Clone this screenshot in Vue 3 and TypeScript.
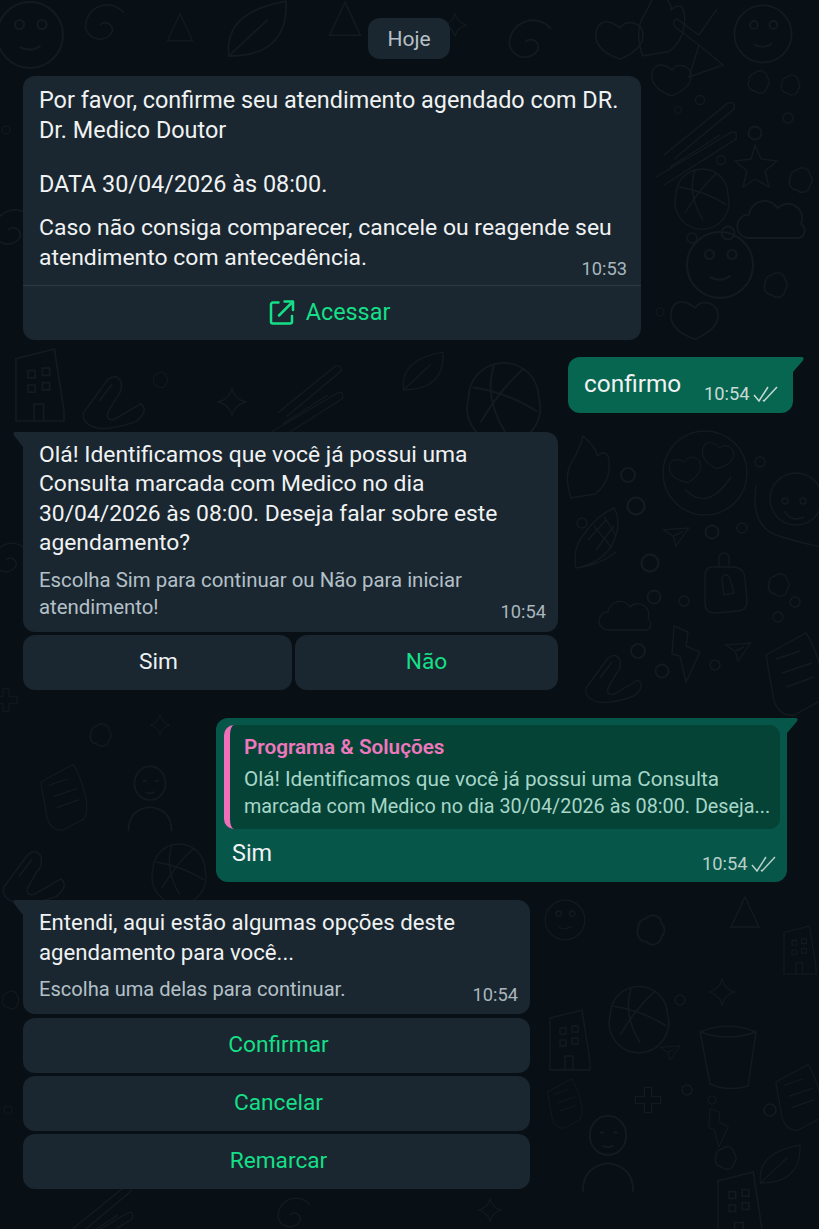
<script setup lang="ts">
interface Doodle { x: number; y: number; s?: number; r?: number; d: string }
const face = 'M-42 0a42 42 0 1 0 84 0a42 42 0 1 0 -84 0M-20 16q22 24 46 -12'
const smile = 'M-22 0a22 22 0 1 0 44 0a22 22 0 1 0 -44 0M-10 -7a3 3 0 1 0 6 0a3 3 0 1 0 -6 0M5 -7a3 3 0 1 0 6 0a3 3 0 1 0 -6 0M-7 8q8 4 14 -1'
const ringFace = 'M-34 -20q-6 40 20 50q30 10 50 12M-20 -6a26 26 0 1 0 52 0a26 26 0 1 0 -52 0M-8 -4a3 3 0 1 0 6 0a3 3 0 1 0 -6 0M10 -4a3 3 0 1 0 6 0a3 3 0 1 0 -6 0M-6 6q8 12 20 6'
const ball = 'M-27 0a27 27 0 1 0 52 0a26 26 0 1 0 -52 0M-24 -8q26 4 48 18M-8 -25q-8 24 8 50M14 -22q-18 16 -32 40'
const star = 'M0 -14q3 11 14 14q-11 3 -14 14q-3 -11 -14 -14q11 -3 14 -14z'
const starOpen = 'M0 -20l6 14l16 2l-12 10l4 16l-14 -8l-12 8l4 -16l-12 -10l16 -2z'
const dot = 'M-5 0a5 5 0 1 0 10 0a5 5 0 1 0 -10 0'
const cloud = 'M-20 10a9 9 0 0 1 0 -18a12 12 0 0 1 22 -5a11 11 0 0 1 18 12a6 6 0 0 1 -2 11z'
const pot = 'M-28 -24q28 10 56 0l-8 54q-20 6 -38 -2zM-28 -24q28 -12 56 0'
const plane = 'M-14 -8l28 -2l-14 20l-3 -11zM-3 -1l10 -5'
const house = 'M-20 30v-52l32 -8l8 52v8zM-10 -12h6v6h-6zM2 -14h6v6h-6zM-10 0h6v6h-6zM2 -2h6v6h-6zM-5 30v-14h8v14'
const corn = 'M-24 28q-4 -20 8 -34q12 -18 30 -26q8 14 0 32q-8 22 -38 28zM-24 28q22 -2 40 -16M-6 -14l18 22M4 -24l12 20M-12 0l18 -20M-4 10l18 -24'
const sticks = 'M-36 20l64 -52q8 -2 6 6l-60 50M-44 42l74 -44q8 -4 6 6l-72 46M-30 32l50 -32'
const bolt = 'M-14 -24l14 6l-2 14l14 6l-14 30l-6 -26l-8 -2z'
const heart = 'M0 16q-22 -8 -20 -22q2 -12 14 -8q4 2 6 4q4 -6 12 -4q10 4 6 16q-4 8 -18 14z'
const plus = 'M-4 -14h8v10h10v8h-10v10h-8v-10h-10v-8h10z'
const flower = 'M-3 -9a7 7 0 0 1 12 4a7 7 0 0 1 0 10a7 7 0 0 1 -12 4a7 7 0 0 1 -6 -10a7 7 0 0 1 6 -8z'
const lock = 'M-20 -12q0 -8 8 -8h22q10 2 10 12l2 22q0 10 -10 10l-22 2q-10 0 -10 -10zM-6 -20v-8q0 -6 5 -6q5 0 5 6v6M-3 -8a4 4 0 0 1 8 0l4 14l-10 2z'
const doc = 'M-24 -10l40 -22q8 10 16 40q4 18 -2 28l-26 14q-14 2 -20 -14zM-14 -6l24 -8M-8 8l30 -10M-4 22l28 -10'
const clip = 'M-24 16l22 -30q8 -6 12 2q2 8 -4 14l-8 14q-2 8 6 6l24 -14q8 6 -4 16q-22 8 -36 6q-14 -4 -12 -14zM-10 6l12 -16'
const person = 'M-18 26q0 -18 18 -20q18 2 18 20M-13 -14a13 14 0 1 0 26 0a13 14 0 1 0 -26 0M-6 -16h3M4 -16h3M-4 -7q4 3 8 0'
const swirl = 'M0 0a6 6 0 0 1 10 6a12 12 0 0 1 -22 -4a18 18 0 0 1 32 -12'
const tri = 'M0 -18l14 30h-28z'
const bow = 'M-6 0l-24 -18q-4 -6 2 -8l22 16l18 -26M-6 0l-10 32l34 -12z'
const flame = 'M-14 28q-8 -24 2 -38q8 -14 10 -24q14 12 14 20q10 -8 12 4q2 22 -14 34z'
const leaf = 'M-24 20q-4 -34 44 -42q2 42 -44 42zM-24 20l30 -28'
const doodles: Doodle[] = [
  { x: 763, y: 34, s: 1.3, d: smile }, { x: 705, y: 45, d: bow }, { x: 672, y: 80, d: heart },
  { x: 658, y: 25, s: 1.1, d: flame }, { x: 700, y: 135, d: sticks }, { x: 755, y: 165, d: starOpen },
  { x: 703, y: 195, d: ball }, { x: 758, y: 82, d: flower }, { x: 790, y: 85, s: .9, d: flower },
  { x: 800, y: 180, s: 1.1, d: flower }, { x: 700, y: 100, s: .9, d: dot }, { x: 678, y: 110, s: .7, d: dot },
  { x: 755, y: 133, s: 1.3, d: dot }, { x: 721, y: 160, s: .9, d: dot }, { x: 788, y: 118, d: dot },
  { x: 728, y: 233, s: 1.3, d: dot }, { x: 692, y: 238, d: dot }, { x: 775, y: 225, s: 1.3, d: cloud },
  { x: 720, y: 265, s: 1.5, d: smile }, { x: 775, y: 285, s: 1.1, d: flower },
  { x: 695, y: 320, s: 1.2, d: heart }, { x: 660, y: 312, s: .8, d: dot },
  { x: 525, y: 42, s: 1.3, d: swirl }, { x: 455, y: 25, s: .8, d: star }, { x: 620, y: 40, s: 1.2, d: heart },
  { x: 345, y: 22, s: 1.1, d: tri }, { x: 260, y: 30, s: 1.3, d: leaf }, { x: 180, y: 30, s: .9, d: tri },
  { x: 100, y: 25, s: 1.2, d: swirl }, { x: 30, y: 35, s: 1.5, d: smile },
  { x: 8, y: 230, s: 1.2, d: swirl }, { x: 6, y: 130, s: .8, d: dot },
  { x: 505, y: 398, s: 1.35, d: ball }, { x: 232, y: 402, s: .95, d: star }, { x: 310, y: 395, s: .9, d: sticks },
  { x: 110, y: 395, s: 1.1, d: clip }, { x: 425, y: 372, s: .9, d: leaf }, { x: 40, y: 385, s: 1.2, d: house },
  { x: 160, y: 380, s: .7, d: flower }, { x: 615, y: 380, s: 1, d: flower },
  { x: 705, y: 473, d: face }, { x: 686, y: 470, s: .8, r: -10, d: heart }, { x: 718, y: 456, s: .8, r: 10, d: heart },
  { x: 790, y: 505, d: ringFace }, { x: 600, y: 540, d: corn },
  { x: 585, y: 470, d: flame }, { x: 676, y: 537, s: .9, d: plane }, { x: 725, y: 587, d: lock },
  { x: 628, y: 620, d: cloud }, { x: 688, y: 650, d: bolt }, { x: 738, y: 652, s: .9, d: plane },
  { x: 790, y: 665, d: doc }, { x: 610, y: 672, d: clip }, { x: 778, y: 585, s: 1, d: flower },
  { x: 628, y: 475, s: 1.4, d: dot }, { x: 636, y: 506, s: 1.7, d: dot }, { x: 582, y: 523, d: dot },
  { x: 712, y: 532, s: 1.3, d: dot }, { x: 742, y: 528, d: dot }, { x: 760, y: 462, d: dot },
  { x: 650, y: 563, s: 1.7, d: dot }, { x: 654, y: 597, s: 1.3, d: dot }, { x: 684, y: 601, d: dot },
  { x: 778, y: 617, d: dot }, { x: 638, y: 651, s: 1.4, d: dot }, { x: 662, y: 671, s: 1.3, d: dot },
  { x: 715, y: 665, d: dot }, { x: 795, y: 602, d: dot },
  { x: 160, y: 725, s: .7, d: star }, { x: 60, y: 790, s: .8, d: doc }, { x: 150, y: 800, s: 1.2, d: person },
  { x: 100, y: 735, s: 1, d: flower }, { x: 30, y: 870, s: 1.1, d: clip }, { x: 180, y: 870, s: 1, d: ball },
  { x: 6, y: 700, s: .8, d: plus }, { x: 6, y: 560, s: 1, d: swirl },
  { x: 565, y: 920, s: .9, d: smile }, { x: 650, y: 930, s: 1.3, d: flower }, { x: 745, y: 915, d: tri },
  { x: 800, y: 950, s: .8, d: house }, { x: 728, y: 1056, d: pot }, { x: 570, y: 1040, s: 1, d: house },
  { x: 640, y: 1015, s: 1.1, d: ball }, { x: 722, y: 992, s: .9, d: star }, { x: 670, y: 1053, s: .7, d: plane },
  { x: 562, y: 1098, s: .6, d: doc }, { x: 648, y: 1100, s: .9, d: plus }, { x: 608, y: 1155, s: 1.4, d: person },
  { x: 720, y: 1125, s: .7, d: bolt }, { x: 795, y: 1090, s: .8, d: doc }, { x: 740, y: 1205, s: 1.1, d: house },
  { x: 100, y: 1215, s: .9, d: sticks }, { x: 290, y: 1215, s: 1, d: swirl }, { x: 490, y: 1210, s: .8, d: star },
  { x: 10, y: 1000, s: .8, d: flower }, { x: 8, y: 1110, s: .8, d: dot }, { x: 680, y: 1000, d: dot },
  { x: 687, y: 1090, d: dot }, { x: 712, y: 1100, s: .8, d: dot }, { x: 770, y: 1110, s: 1.2, d: dot },
  { x: 725, y: 1158, d: flower }, { x: 782, y: 1165, s: .9, d: leaf }
]
const transformOf = (d: Doodle) => `translate(${d.x} ${d.y}) scale(${d.s ?? 1}) rotate(${d.r ?? 0})`
const buttons = ['Confirmar', 'Cancelar', 'Remarcar']
</script>

<template>
  <main class="chat">
    <svg class="wallpaper" width="819" height="1229" viewBox="0 0 819 1229" aria-hidden="true">
      <path v-for="(d, i) in doodles" :key="i" :d="d.d" :transform="transformOf(d)" />
    </svg>

    <div class="chip">Hoje</div>

    <section class="bubble in first">
      <div class="body">
        <p class="text wide">Por favor, confirme seu atendimento agendado com DR.<br />Dr. Medico Doutor</p>
        <p class="text wide date">DATA 30/04/2026 às 08:00.</p>
        <p class="text note">Caso não consiga comparecer, cancele ou reagende seu<br />atendimento com antecedência.</p>
        <span class="time abs low">10:53</span>
      </div>
      <div class="access">
        <svg width="26" height="26" viewBox="0 0 26 26" fill="none" stroke="#15df87" stroke-width="2.5" stroke-linecap="round" stroke-linejoin="round">
          <path d="M9.5 3.5H4a2 2 0 0 0-2 2v17a2 2 0 0 0 2 2h17a2 2 0 0 0 2-2V17" />
          <path d="M10 16.5 22 4.5" />
          <path d="M15.5 2.5h8.5v8.5" />
        </svg>
        <span>Acessar</span>
      </div>
    </section>

    <section class="bubble out confirm">
      <span class="text large">confirmo</span>
      <span class="time">10:54
        <svg class="ticks" width="26" height="18" viewBox="0 0 26 18" fill="none" stroke="currentColor" stroke-width="1.5"><path d="M1 10l5 6L15 2M10 15l1 1L24 2" /></svg>
      </span>
      <i class="tail-out" />
    </section>

    <section class="bubble in second tailed">
      <i class="tail-in" />
      <p class="text mid">Olá! Identificamos que você já possui uma<br />Consulta marcada com Medico no dia<br />30/04/2026 às 08:00. Deseja falar sobre este<br />agendamento?</p>
      <p class="foot">Escolha Sim para continuar ou Não para iniciar<br />atendimento!</p>
      <span class="time abs">10:54</span>
    </section>
    <div class="pair">
      <button class="action plain sim">Sim</button>
      <button class="action">Não</button>
    </div>

    <section class="bubble out reply">
      <i class="tail-out" />
      <div class="quote">
        <strong>Programa &amp; Soluções</strong>
        <span class="q1">Olá! Identificamos que você já possui uma Consulta</span>
        <span class="q2">marcada com Medico no dia 30/04/2026 às 08:00. Deseja...</span>
      </div>
      <div class="reply-row">
        <span class="text large-sim">Sim</span>
        <span class="time">10:54
          <svg class="ticks" width="26" height="18" viewBox="0 0 26 18" fill="none" stroke="currentColor" stroke-width="1.5"><path d="M1 10l5 6L15 2M10 15l1 1L24 2" /></svg>
        </span>
      </div>
    </section>

    <section class="bubble in third tailed">
      <i class="tail-in" />
      <p class="text">Entendi, aqui estão algumas opções deste<br />agendamento para você...</p>
      <p class="foot">Escolha uma delas para continuar.</p>
      <span class="time abs">10:54</span>
    </section>
    <div class="stack">
      <button v-for="b in buttons" :key="b" class="action">{{ b }}</button>
    </div>
  </main>
</template>

<style>
html, body { margin: 0; background: #081015; }
</style>

<style scoped>
.chat {
  position: relative;
  width: 819px;
  height: 1229px;
  overflow: hidden;
  box-sizing: border-box;
  padding: 18px 0 0 23px;
  background: #081015;
  font-family: Roboto, "Noto Sans", sans-serif;
  color: #eef1f2;
}
.wallpaper { position: absolute; inset: 0; fill: none; stroke: #131b20; stroke-width: 1.4; }
.chip, .bubble, .pair, .stack { position: relative; }
.chip {
  width: 82px; height: 41px; margin-left: 345px; border-radius: 12px;
  background: #1a2730; color: #b5c0c7; font-size: 21px; line-height: 42px; text-align: center;
}
.bubble { box-sizing: border-box; border-radius: 12px; }
.in { background: #1a2730; }
.out { background: #055c47; }
.tailed { border-top-left-radius: 0; }
p { margin: 0; }
.text { font-size: 22.2px; line-height: 29.4px; color: #f0f2f3; }
.wide { font-size: 23.4px; line-height: 30.4px; }
.mid { font-size: 22.85px; }
.large { font-size: 24.4px; }
.large-sim { font-size: 23.4px; }
.first { width: 618px; height: 264px; margin-top: 17px; }
.body { position: relative; height: 210px; padding: 9px 16px 0; box-sizing: border-box; border-bottom: 1px solid #2d3a42; }
.date { margin-top: 23px; }
.note { margin-top: 14px; font-size: 22.95px; }
.time { font-size: 18.3px; line-height: 20px; color: #a9b6bd; white-space: nowrap; }
.abs { position: absolute; right: 12px; bottom: 10px; }
.low { right: 14px; bottom: 6px; }
.access { height: 54px; display: flex; align-items: center; justify-content: center; gap: 11px; padding: 0 5px 2px 0; box-sizing: border-box; color: #15df87; font-size: 23.4px; }
.confirm { width: 225px; height: 56px; margin: 17px 0 0 545px; padding: 12px 14px 12px 16px; display: flex; justify-content: space-between; align-items: flex-start; background: #066650; border-top-right-radius: 0; }
.confirm .time { margin-top: 15px; color: #c9dad5; }
.ticks { vertical-align: -3px; margin-left: -1px; }
.tail-out { position: absolute; top: 0; left: 100%; width: 11px; height: 15px; background: inherit; clip-path: polygon(0 0, 82% 0, 98% 6%, 88% 25%, 0 100%); }
.tail-in { position: absolute; top: 0; right: 100%; width: 10px; height: 15px; background: inherit; clip-path: polygon(100% 0, 18% 0, 2% 6%, 12% 25%, 100% 100%); }
.second { width: 535px; height: 200px; margin-top: 19px; padding: 8px 16px 0; }
.foot { margin-top: 9px; font-size: 20.4px; line-height: 27px; color: #b4c0c8; }
.pair { display: flex; gap: 3px; width: 535px; margin-top: 3px; }
.action {
  display: block; flex: none; width: 100%; height: 55px; padding: 0 0 2px; border: 0; border-radius: 12px;
  background: #1a2730; color: #15df87; font: 400 22.7px/30px Roboto, "Noto Sans", sans-serif; text-align: center;
}
.pair .action { flex: 1; width: auto; }
.stack .action { padding-left: 4px; }
.plain { color: #eef1f2; }
.pair .sim { flex: none; width: 269px; padding-left: 2px; }
.reply { width: 571px; height: 164px; margin: 28px 0 0 193px; padding: 7px 7px 0 8px; background: #06574a; border-top-right-radius: 0; }
.quote {
  box-sizing: border-box; height: 104px; padding: 9px 8px 0 14px; border-left: 6px solid #f06fb9; border-radius: 10px;
  background: #044336; display: flex; flex-direction: column;
}
.quote strong { font-size: 20.7px; line-height: 27px; font-weight: 600; color: #ee78bd; }
.quote span { line-height: 27px; color: #a8d6c9; white-space: nowrap; }
.q1 { font-size: 20.7px; margin-top: 5px; }
.q2 { font-size: 19.8px; }
.reply-row { display: flex; justify-content: space-between; padding: 10px 3px 0 8px; }
.reply-row .time { margin-top: 15px; color: #b9cfc9; }
.third { width: 507px; height: 114px; margin-top: 18px; padding: 8px 16px 0; }
.third .text { line-height: 29.6px; }
.third .foot { margin-top: 9px; font-size: 20.1px; }
.third .abs { right: 12px; bottom: 9px; }
.stack { width: 507px; margin-top: 4px; display: flex; flex-direction: column; gap: 3px; }
</style>
